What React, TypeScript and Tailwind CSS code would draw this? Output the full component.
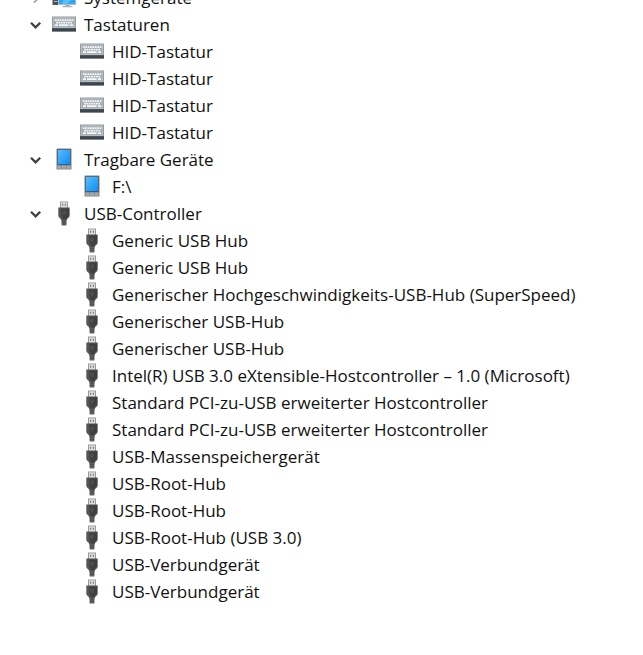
import React, { useState } from "react";

type IconProps = { className?: string };

function KeyboardIcon({ className }: IconProps) {
  return (
    <svg viewBox="0 0 24 16" className={className} aria-hidden="true">
      <rect x="0" y="0.5" width="24" height="15" fill="#8f979e" />
      <rect x="0.8" y="1.2" width="22.4" height="10.8" fill="#b4bbc1" />
      <rect x="2" y="2.6" width="20" height="8" fill="#a2a9af" />
      <g stroke="#f7f9fa" strokeWidth="1.6" fill="none">
        <path d="M2.8 4.1H21.6" strokeDasharray="1.8 0.6" />
        <path d="M4 6.6H20.6" strokeDasharray="1.8 0.6" />
        <path d="M2.8 9.1H6M7 9.1H16.6M17.8 9.1H21.2" />
      </g>
      <rect x="0" y="12.2" width="24" height="3.3" fill="#3d464e" />
    </svg>
  );
}

function PhoneIcon({ className }: IconProps) {
  return (
    <svg viewBox="0 0 16 22" className={className} aria-hidden="true">
      <defs>
        <linearGradient id="phone-screen" x1="0" y1="0" x2="1" y2="1">
          <stop offset="0" stopColor="#5cbdfb" />
          <stop offset="0.5" stopColor="#31a5f8" />
          <stop offset="1" stopColor="#128ef0" />
        </linearGradient>
      </defs>
      <rect x="0.5" y="0.5" width="15" height="21" rx="0.5" fill="#7c8085" />
      <rect x="1.5" y="1.5" width="13" height="15.5" fill="#35516a" />
      <rect x="2" y="2" width="12" height="14.2" fill="url(#phone-screen)" />
      <rect x="1.4" y="17.6" width="13.2" height="3.2" fill="#a5a8ab" />
      <path d="M5.5 17.6V20.8M10.5 17.6V20.8" stroke="#808488" strokeWidth="0.8" />
    </svg>
  );
}

function UsbIcon({ className }: IconProps) {
  return (
    <svg viewBox="0 0 12 25" className={className} aria-hidden="true">
      <rect x="2" y="0.5" width="8" height="7" fill="#9a9a9a" />
      <rect x="3" y="1.4" width="6" height="5.6" fill="#e0e0e0" />
      <path d="M4 2.8H5.2V4.8H4ZM6.8 2.8H8V4.8H6.8Z" fill="#777777" />
      <path d="M0.3 6.5H11.7V14.5C11.7 16.8 8.8 17.2 8.8 19.4H3.2C3.2 17.2 0.3 16.8 0.3 14.5Z" fill="#555555" />
      <path d="M3.4 7.5H11V14.3C10.6 16 8 16.6 7.6 18.6H5C4.8 16.6 3.4 16 3.4 14Z" fill="#404040" />
      <path d="M6 9V14.5M4.6 10.6V12L6 13.2M7.6 10V11.3L6 12.5" stroke="#626262" strokeWidth="0.6" fill="none" />
      <rect x="3.6" y="19" width="4.8" height="5.5" fill="#606060" />
      <path d="M3.6 20.4H8.4M3.6 22.3H8.4" stroke="#4a4a4a" strokeWidth="0.7" />
    </svg>
  );
}

function ComputerIcon({ className }: IconProps) {
  return (
    <svg viewBox="0 0 24 22" className={className} aria-hidden="true">
      <rect x="0.5" y="2" width="9" height="17" fill="#4c535a" />
      <path d="M2 15.5H5.5" stroke="#b6bcc1" strokeWidth="1" />
      <rect x="6" y="2" width="18" height="17" fill="#a5bccb" />
      <rect x="7.2" y="3" width="16" height="14.8" fill="#2aa5f3" />
      <path d="M16 3H23.2V11L15 17.8H10Z" fill="#5bc0fa" />
      <path d="M13 19H18V20H20.5V21.2H10.5V20H13Z" fill="#aab4bd" />
    </svg>
  );
}

function Chevron({ open }: { open: boolean }) {
  return (
    <svg viewBox="0 0 12 12" className="w-3 h-3" fill="none" aria-hidden="true">
      {open ? (
        <path d="M1 3.8L5.6 8.4L10.2 3.8" stroke="#404040" strokeWidth="2.3" />
      ) : (
        <path d="M4 1.4L8.6 6L4 10.6" stroke="#a6a6a6" strokeWidth="1.8" />
      )}
    </svg>
  );
}

type Category = {
  label: string;
  icon: React.ComponentType<IconProps>;
  iconClass: string;
  devices: string[];
};

const categories: Category[] = [
  { label: "Systemgeräte", icon: ComputerIcon, iconClass: "w-6 h-[22px]", devices: [] },
  {
    label: "Tastaturen",
    icon: KeyboardIcon,
    iconClass: "w-6 h-4",
    devices: ["HID-Tastatur", "HID-Tastatur", "HID-Tastatur", "HID-Tastatur"],
  },
  { label: "Tragbare Geräte", icon: PhoneIcon, iconClass: "w-4 h-[22px]", devices: ["F:\\"] },
  {
    label: "USB-Controller",
    icon: UsbIcon,
    iconClass: "w-3 h-[25px]",
    devices: [
      "Generic USB Hub",
      "Generic USB Hub",
      "Generischer Hochgeschwindigkeits-USB-Hub (SuperSpeed)",
      "Generischer USB-Hub",
      "Generischer USB-Hub",
      "Intel(R) USB 3.0 eXtensible-Hostcontroller – 1.0 (Microsoft)",
      "Standard PCI-zu-USB erweiterter Hostcontroller",
      "Standard PCI-zu-USB erweiterter Hostcontroller",
      "USB-Massenspeichergerät",
      "USB-Root-Hub",
      "USB-Root-Hub",
      "USB-Root-Hub (USB 3.0)",
      "USB-Verbundgerät",
      "USB-Verbundgerät",
    ],
  },
];

function CategoryNode({ category }: { category: Category }) {
  const [open, setOpen] = useState(category.devices.length > 0);
  const Icon = category.icon;

  return (
    <li>
      <button
        type="button"
        aria-expanded={open}
        onClick={() => setOpen(!open)}
        className="flex items-center h-[27px] pl-[30px] text-left whitespace-nowrap"
      >
        <Chevron open={open} />
        <span className="flex justify-center w-6 ml-[10px] mr-2 pb-px">
          <Icon className={category.iconClass} />
        </span>
        {category.label}
      </button>

      {open && (
        <ul>
          {category.devices.map((device, i) => (
            <li key={i} className="flex items-center gap-2 h-[27px] pl-20 whitespace-nowrap">
              <span className="flex justify-center w-6 pb-px">
                <Icon className={category.iconClass} />
              </span>
              {device}
            </li>
          ))}
        </ul>
      )}
    </li>
  );
}

export default function App() {
  return (
    <main className="min-h-screen overflow-hidden bg-white text-[17px] leading-[27px] text-[#111111] font-['Open_Sans','Noto_Sans',sans-serif]">
      {/* Scrolled part of the list: the first row is cut by the top edge */}
      <ul className="-mt-4">
        {categories.map((category) => (
          <CategoryNode key={category.label} category={category} />
        ))}
      </ul>
    </main>
  );
}
